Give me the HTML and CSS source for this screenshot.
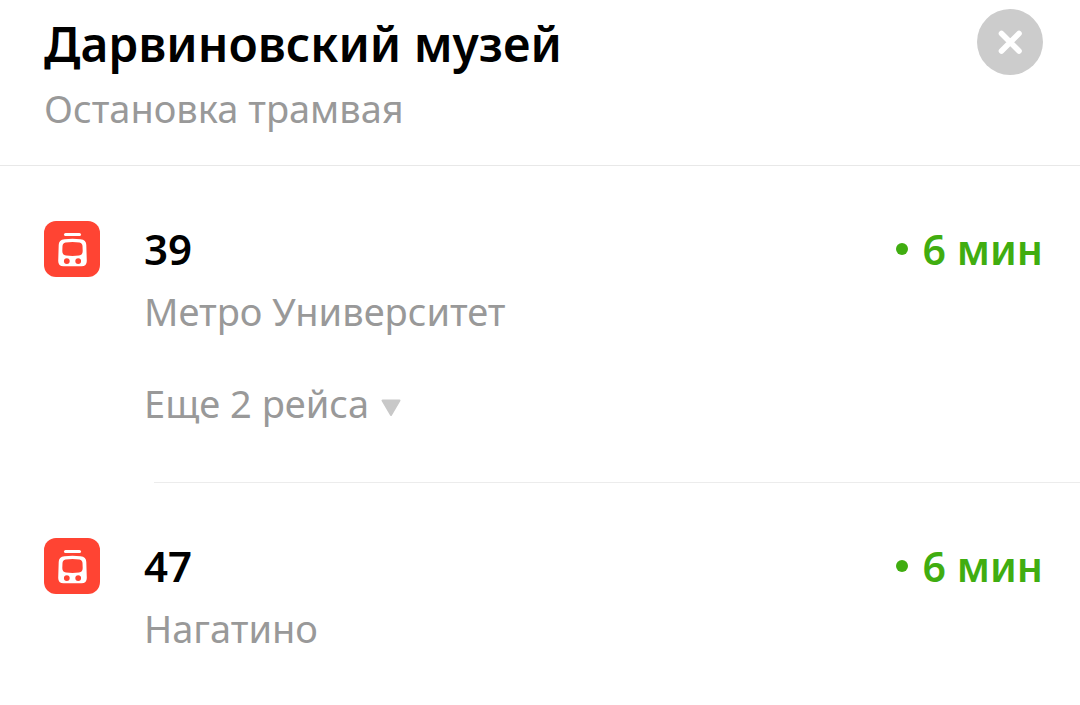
FILE: index.html
```html
<!DOCTYPE html>
<html lang="ru">
<head>
<meta charset="utf-8">
<meta name="viewport" content="width=device-width, initial-scale=1">
<title>Дарвиновский музей</title>
<link rel="stylesheet" href="styles.css">
</head>
<body>
<svg class="sprite" aria-hidden="true">
  <symbol id="tram" viewBox="0 0 56 56">
    <rect x="20" y="12" width="17" height="3" rx="1.5" fill="#fff"/>
    <path fill="#fff" fill-rule="evenodd" d="M20.500 18.300Q28.500 17.300 36.500 18.300Q42.300 19 42.300 24L42.800 40Q42.800 45.300 37.500 45.300H19.500Q14.200 45.300 14.200 40L14.700 24Q14.700 19 20.500 18.300ZM21.500 21.500Q18.700 22 18.500 25L18.300 30Q18.300 34 22 34.500Q28.500 35.300 35 34.500Q38.700 34 38.700 30L38.500 25Q38.300 22 35.500 21.500Q28.500 20.700 21.500 21.500ZM22.800 37.200a2.900 2.900 0 1 0 0 5.800a2.900 2.900 0 1 0 0-5.800ZM34.200 37.200a2.900 2.900 0 1 0 0 5.800a2.900 2.900 0 1 0 0-5.800Z"/>
  </symbol>
</svg>
<main class="card">
  <header class="header">
    <div class="heading">
      <h1 class="title">Дарвиновский музей</h1>
      <p class="note">Остановка трамвая</p>
    </div>
    <button class="close" type="button" aria-label="Закрыть">
      <svg viewBox="0 0 66 66" aria-hidden="true"><path d="M24.500 24.500L42 42M42 24.500L24.500 42" fill="none" stroke="#fff" stroke-width="5.600" stroke-linecap="round"/></svg>
    </button>
  </header>
  <ul class="routes">
    <li class="route">
      <svg class="badge" role="img" aria-label="Трамвай"><use href="#tram"/></svg>
      <div class="info">
        <div class="line">
          <h2 class="number">39</h2>
          <span class="time">6 мин</span>
        </div>
        <p class="note">Метро Университет</p>
        <button class="more" type="button">Еще 2 рейса
          <svg class="arrow" viewBox="0 0 20 18" aria-hidden="true"><path d="M1.500 1.500H18.500L10 16Z" fill="#c8c8c8" stroke="#c8c8c8" stroke-width="2" stroke-linejoin="round"/></svg>
        </button>
      </div>
    </li>
    <li class="route">
      <svg class="badge" role="img" aria-label="Трамвай"><use href="#tram"/></svg>
      <div class="info">
        <div class="line">
          <h2 class="number">47</h2>
          <span class="time">6 мин</span>
        </div>
        <p class="note">Нагатино</p>
      </div>
    </li>
  </ul>
</main>
</body>
</html>
```
FILE: styles.css
```css
* { box-sizing: border-box; margin: 0; padding: 0; }
body { background: #fff; color: #000; font-family: "Noto Sans", sans-serif; }
button { border: 0; background: none; color: inherit; font: inherit; cursor: pointer; }
.sprite { display: none; }
.header {
  display: flex;
  justify-content: space-between;
  align-items: flex-start;
  padding: 9px 37px 33px 44px;
  border-bottom: 1px solid #e8e8e8;
}
.heading { padding-top: 5px; }
.title { font-size: 48px; line-height: 60px; font-weight: 600; }
.note, .more { color: #999; font-size: 38px; line-height: 48px; }
.note { margin-top: 10px; }
.close { flex: none; width: 66px; height: 66px; border-radius: 50%; background: #ccc; }
.close svg { display: block; width: 100%; height: 100%; }
.routes { list-style: none; }
.route { display: flex; gap: 44px; padding-left: 44px; }
.badge { flex: none; width: 56px; height: 56px; margin-top: 55px; border-radius: 12px; background: #ff4433; }
.info { flex: 1; padding: 55px 37px 55px 0; }
.route:not(:last-child) .info {
  background: linear-gradient(#ececec, #ececec) 10px 100% / 100% 1px no-repeat;
  padding-bottom: 56px;
}
.line { display: flex; justify-content: space-between; align-items: center; }
.number, .time { line-height: 56px; font-weight: 600; }
.number { font-size: 42px; }
.time { display: flex; align-items: center; gap: 15px; color: #40ad10; font-size: 41px; }
.time::before { content: ""; width: 12px; height: 12px; border-radius: 50%; background: currentColor; }
.more { display: flex; align-items: center; gap: 12px; margin-top: 44px; }
.arrow { width: 20px; height: 18px; margin-top: 10px; }
```
